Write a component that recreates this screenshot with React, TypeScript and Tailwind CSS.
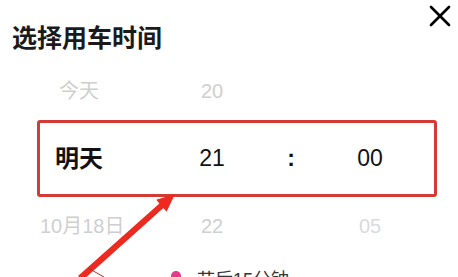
import React from 'react';

const font = { fontFamily: '"Liberation Sans", "Noto Sans CJK SC", sans-serif' };

type Row = { day: string; hour: string; minute: string; active?: boolean };

const rows: Row[] = [
  { day: '今天', hour: '20', minute: '' },
  { day: '明天', hour: '21', minute: '00', active: true },
  { day: '10月18日', hour: '22', minute: '05' },
];

export default function App() {
  return (
    <div className="relative w-[458px] h-[277px] overflow-hidden bg-white" style={font}>
      {/* Header */}
      <div className="flex items-start justify-between pl-3 pr-[6px]">
        <h2 className="mt-[22px] text-[25px] leading-8 font-semibold text-[#1a1a1a]">选择用车时间</h2>
        <button className="mt-[4px] w-6 h-6 text-black">
          <svg viewBox="0 0 24 24" width="24" height="24" fill="none" stroke="currentColor" strokeWidth="2.6" strokeLinecap="round">
            <path d="M3 3 L21 21 M21 3 L3 21" />
          </svg>
        </button>
      </div>

      {/* Picker */}
      <div className="mt-[8px] flex flex-col">
        {rows.map((r, i) => (
          <div
            key={i}
            className={`ml-[37px] mr-[21px] flex items-center border-[3px] rounded-[3px] ${
              r.active ? 'h-[77px] border-[#d33c36]' : 'h-[58px] border-transparent'
            }`}
          >
            <div
              className={`w-[78px] text-center whitespace-nowrap ${
                r.active ? 'text-[24px] font-semibold text-[#111]' : 'text-[20px] text-[#cfcfcf]'
              }`}
            >
              {r.day}
            </div>
            <div
              className={`ml-[44px] w-[100px] text-center ${
                r.active ? 'text-[23px] font-medium text-[#111]' : 'text-[20px] text-[#cfcfcf]'
              }`}
            >
              {r.hour}
            </div>
            <div className="w-[58px] text-center text-[23px] font-bold text-[#111]">{r.active ? ':' : ''}</div>
            <div
              className={`w-[100px] text-center ${
                r.active ? 'text-[23px] font-medium text-[#111]' : 'text-[20px] text-[#dadada]'
              }`}
            >
              {r.minute}
            </div>
          </div>
        ))}
      </div>

      {/* Hint row */}
      <div className="mt-[13px] flex items-start pl-[171px]">
        <span className="mt-[3px] w-[10px] h-[10px] rounded-full bg-[#e23a8c]" />
        <span className="ml-4 text-[18px] leading-6 text-[#333]">节后15分钟</span>
      </div>

      {/* Annotation arrow */}
      <svg className="absolute inset-0 pointer-events-none" width="458" height="277" viewBox="0 0 458 277">
        <polygon
          points="78,276 159.4,203.5 156.2,199.8 175,194 166.6,211.8 163.4,208.1 83,280"
          fill="#ec2a1f"
        />
        <line x1="88" y1="268" x2="104" y2="277" stroke="#b0302a" strokeWidth="1" />
      </svg>
    </div>
  );
}
